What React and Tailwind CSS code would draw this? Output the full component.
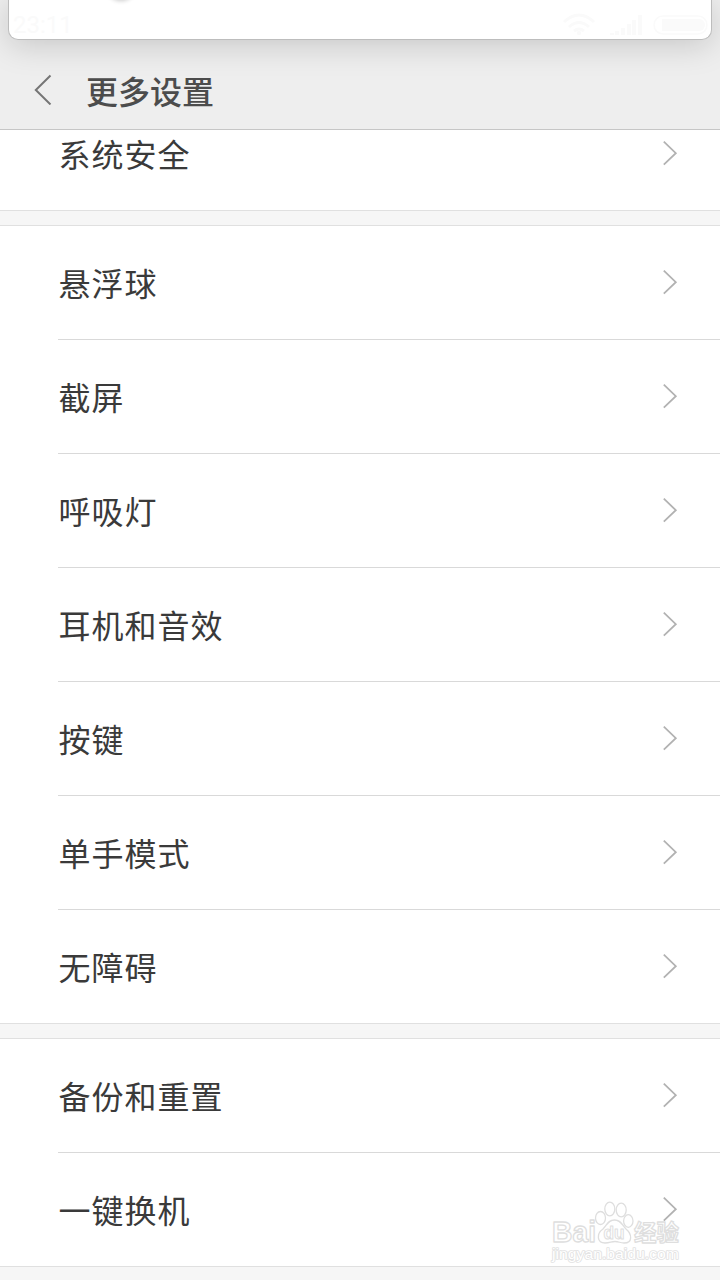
const floatingGroup = ['悬浮球', '截屏', '呼吸灯', '耳机和音效', '按键', '单手模式', '无障碍'];
const backupGroup = ['备份和重置', '一键换机'];

function Row({ label, last }) {
  return (
    <li className="relative flex h-[114px] shrink-0 items-center justify-between pr-[42px] pl-[58px]">
      <span className="pb-0.5 pl-[0.5px] text-[32px] leading-[48px] tracking-[1px] text-[#3a3a3a]">{label}</span>
      <svg className="mb-0.5 h-[26px] w-4" viewBox="0 0 16 26" fill="none" stroke="#b2b2b2" strokeWidth="1.8">
        <path d="M1.8 1.7 13.8 13.2 1.8 24.7" />
      </svg>
      <span className={last ? 'absolute right-0 bottom-0 left-0 h-px bg-[#e0e0e0]' : 'absolute right-0 bottom-0 left-[58px] h-px bg-[#d9d9d9]'} />
    </li>
  );
}

function Group({ items }) {
  return (
    <ul className="flex flex-col bg-white">
      {items.map((label, i) => (
        <Row key={label} label={label} last={i === items.length - 1} />
      ))}
    </ul>
  );
}

function Gap() {
  return <div className="h-[15px] shrink-0 border-b border-[#e0e0e0] bg-[#f6f6f6]" />;
}

function StatusIcons() {
  return (
    <svg className="h-6 w-[146px]" viewBox="0 0 146 24" fill="none" stroke="#fafafa" strokeWidth="3">
      <path d="M2 10Q17-4 32 10M7 15Q17 6 27 15M12 19Q17 15 22 19" />
      <circle cx="17" cy="21" r="2.2" fill="#fafafa" stroke="none" />
      <path d="M50 23v-2M55 23v-4M61 23v-7M67 23v-11M72 23v-15M78 23V3" strokeWidth="4" />
      <rect x="92" y="4" width="53" height="18" rx="9" strokeWidth="1.5" />
      <path d="M100 7h37a6 6 0 0 1 0 12h-37z" fill="#fafafa" stroke="none" />
    </svg>
  );
}

function Watermark() {
  return (
    <svg
      className="absolute top-[1196px] left-[546px] h-[72px] w-[144px]"
      viewBox="0 0 144 72"
      fill="#ffffff"
      stroke="#dedede"
      strokeWidth="1.3"
      strokeLinejoin="round"
    >
      <g fontFamily="'Liberation Sans', 'Noto Sans CJK SC', sans-serif" fontWeight="700">
        <text x="6" y="46" fontSize="29" textLength="44" lengthAdjust="spacingAndGlyphs">Bai</text>
        <ellipse cx="54.5" cy="22" rx="5" ry="6.5" />
        <ellipse cx="63.8" cy="13" rx="5" ry="6.8" />
        <ellipse cx="75.2" cy="14" rx="5" ry="6.8" />
        <ellipse cx="82.3" cy="25" rx="4.7" ry="6.3" />
        <path d="M68.5 24C62 24 61 29 57 33C50 38 51 47 59 47C64 47 65 45.5 69 45.5C73 45.5 74 47 78 47C87 47 86 38 80 33C76 29 75 24 68.5 24Z" />
        <text x="57.5" y="43" fontSize="18" textLength="21" lengthAdjust="spacingAndGlyphs" strokeWidth="1">du</text>
        <text x="88" y="44.5" fontSize="23" textLength="45" lengthAdjust="spacingAndGlyphs" fontFamily="'Noto Sans CJK SC', sans-serif">经验</text>
        <text x="6" y="63" fontSize="14" fontWeight="400" textLength="127" lengthAdjust="spacingAndGlyphs" stroke="#e2e2e2" strokeWidth="1.6" paintOrder="stroke">jingyan.baidu.com</text>
      </g>
    </svg>
  );
}

export default function App() {
  return (
    <main className="relative flex h-[1280px] w-[720px] flex-col overflow-hidden bg-[#f6f6f6] font-['Noto_Sans_CJK_SC',sans-serif]">
      <header className="relative flex h-[130px] shrink-0 flex-col overflow-hidden border-b border-[#c6c6c6] bg-[#eeeeee]">
        <div className="relative mx-2 h-10 shrink-0 rounded-b-[10px] border border-t-0 border-[#bdbdbd] bg-white shadow-[0_5px_32px_rgba(0,0,0,0.17)]">
          <div className="flex h-full items-end justify-between pr-[3px] pl-1">
            <span className="font-['Roboto',sans-serif] text-[24px] leading-[28px] text-[#fafafa]">23:11</span>
            <div className="mb-[3px] flex">
              <StatusIcons />
            </div>
          </div>
          <div className="absolute inset-x-0 top-0 h-2 overflow-hidden">
            <span className="absolute -top-[27px] left-[98px] h-[27px] w-[28px] rounded-full bg-[#eeeeee] shadow-[0_1px_4px_rgba(0,0,0,0.2)]" />
          </div>
        </div>
        <div className="flex h-[89px] items-center pt-[11px] pl-[34px]">
          <svg className="mb-0.5 h-8 w-[18px]" viewBox="0 0 18 32" fill="none" stroke="#757575" strokeWidth="2">
            <path d="M16.5 2.5 1.8 17 16.5 31.5" />
          </svg>
          <h1 className="ml-[34px] text-[32px] leading-[48px] font-medium text-[#4c4c4c]">更多设置</h1>
        </div>
      </header>
      <section className="flex h-[81px] shrink-0 flex-col justify-end overflow-hidden">
        <Group items={['系统安全']} />
      </section>
      <Gap />
      <Group items={floatingGroup} />
      <Gap />
      <Group items={backupGroup} />
      <Watermark />
    </main>
  );
}
